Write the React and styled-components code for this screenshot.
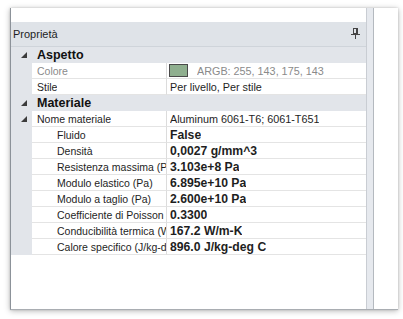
import styled, { createGlobalStyle } from "styled-components";

const Global = createGlobalStyle`
  html, body {
    margin: 0;
    padding: 0;
    background: #ffffff;
  }
  body {
    font-family: "Liberation Sans", Arial, sans-serif;
  }
`;

const rows = [
  { type: "group", label: "Aspetto" },
  { label: "Colore", value: "ARGB: 255, 143, 175, 143", swatch: "#8faf8f", muted: true },
  { label: "Stile", value: "Per livello, Per stile" },
  { type: "group", label: "Materiale" },
  { label: "Nome materiale", value: "Aluminum 6061-T6; 6061-T651", expand: true },
  { label: "Fluido", value: "False", bold: true, sub: true },
  { label: "Densità", value: "0,0027 g/mm^3", bold: true, sub: true },
  { label: "Resistenza massima (Pa)", value: "3.103e+8 Pa", bold: true, sub: true },
  { label: "Modulo elastico (Pa)", value: "6.895e+10 Pa", bold: true, sub: true },
  { label: "Modulo a taglio (Pa)", value: "2.600e+10 Pa", bold: true, sub: true },
  { label: "Coefficiente di Poisson", value: "0.3300", bold: true, sub: true },
  { label: "Conducibilità termica (W/m-K)", value: "167.2 W/m-K", bold: true, sub: true },
  { label: "Calore specifico (J/kg-deg C)", value: "896.0 J/kg-deg C", bold: true, sub: true },
];

function Expander() {
  return (
    <svg width="6" height="6" viewBox="0 0 6 6">
      <polygon points="6,0 6,6 0,6" fill="#3c3c3c" />
    </svg>
  );
}

function Pin() {
  return (
    <svg width="9" height="12" viewBox="0 0 9 12">
      <rect x="2.5" y="0.5" width="4" height="5" fill="none" stroke="#444" />
      <rect x="5" y="1" width="1" height="4" fill="#444" />
      <line x1="0" y1="6.5" x2="9" y2="6.5" stroke="#444" />
      <line x1="4.5" y1="7" x2="4.5" y2="11" stroke="#444" />
    </svg>
  );
}

export default function App() {
  return (
    <>
      <Global />
      <Page>
        <Window>
          <Panel>
            <TopSpace />
            <Header>
              <span>Proprietà</span>
              <Pin />
            </Header>
            <Grid>
              {rows.map((r, i) =>
                r.type === "group" ? (
                  <GroupRow key={i}>
                    <Gutter>
                      <Expander />
                    </Gutter>
                    <GroupLabel>{r.label}</GroupLabel>
                  </GroupRow>
                ) : (
                  <Row key={i}>
                    <Gutter>{r.expand && <Expander />}</Gutter>
                    <NameCell $sub={r.sub} $muted={r.muted}>
                      <Clip>{r.label}</Clip>
                    </NameCell>
                    <ValueCell $bold={r.bold} $muted={r.muted}>
                      {r.swatch && <Swatch $color={r.swatch} />}
                      <Clip>{r.value}</Clip>
                    </ValueCell>
                  </Row>
                )
              )}
            </Grid>
          </Panel>
          <Splitter />
          <SidePanel />
        </Window>
      </Page>
    </>
  );
}

const Page = styled.div`
  width: 403px;
  height: 319px;
  padding: 8px 0 0 10px;
  box-sizing: border-box;
  background: #ffffff;
`;

const Window = styled.div`
  width: 388px;
  height: 302px;
  display: flex;
  background: #ffffff;
  border-left: 1px solid #8c9299;
  border-bottom: 1px solid #a9adb2;
  box-sizing: border-box;
  box-shadow: 0 1px 6px rgba(0, 0, 0, 0.28), 0 0 2px rgba(0, 0, 0, 0.15);
`;

const Panel = styled.div`
  width: 355px;
  display: flex;
  flex-direction: column;
`;

const TopSpace = styled.div`
  height: 14px;
`;

const Header = styled.div`
  height: 25px;
  display: flex;
  align-items: center;
  justify-content: space-between;
  padding: 0 6px 0 2px;
  background: #dfe3e8;
  border-bottom: 1px solid #cfd4da;
  box-sizing: border-box;
  font-size: 11px;
  color: #1e1e1e;
`;

const Grid = styled.div`
  display: flex;
  flex-direction: column;
`;

const Row = styled.div`
  display: grid;
  grid-template-columns: 21px 135px 1fr;
  height: 16px;
`;

const GroupRow = styled(Row)`
  grid-template-columns: 21px 1fr;
  background: #e2e5ea;
`;

const Gutter = styled.div`
  background: #e2e5ea;
  display: flex;
  align-items: center;
  padding-left: 10px;
`;

const GroupLabel = styled.div`
  display: flex;
  align-items: center;
  padding-left: 5px;
  font-size: 12.5px;
  font-weight: bold;
  color: #111;
`;

const NameCell = styled.div`
  display: flex;
  align-items: center;
  min-width: 0;
  padding-left: ${(p) => (p.$sub ? "25px" : "5px")};
  border-right: 1px solid #dcdcdc;
  border-bottom: 1px solid #e4e4e4;
  box-sizing: border-box;
  overflow: hidden;
  font-size: 10.5px;
  color: ${(p) => (p.$muted ? "#8a8a8a" : "#1e1e1e")};
`;

const ValueCell = styled.div`
  display: flex;
  align-items: center;
  min-width: 0;
  padding-left: 3px;
  border-bottom: 1px solid #e4e4e4;
  box-sizing: border-box;
  overflow: hidden;
  font-size: ${(p) => (p.$bold ? "12.2px" : "10.8px")};
  font-weight: ${(p) => (p.$bold ? "bold" : "normal")};
  color: ${(p) => (p.$muted ? "#8a8a8a" : "#1e1e1e")};
`;

const Clip = styled.span`
  display: block;
  min-width: 0;
  white-space: nowrap;
  overflow: hidden;
`;

const Swatch = styled.span`
  flex: none;
  width: 17px;
  height: 11px;
  margin: 0 9px 0 -1px;
  background: ${(p) => p.$color};
  border: 1px solid #4a4a4a;
`;

const Splitter = styled.div`
  width: 8px;
  background: #e6e9ee;
  border-left: 1px solid #c9cdd3;
  border-right: 1px solid #b4b9bf;
  box-sizing: border-box;
`;

const SidePanel = styled.div`
  flex: 1;
  background: #ffffff;
`;
